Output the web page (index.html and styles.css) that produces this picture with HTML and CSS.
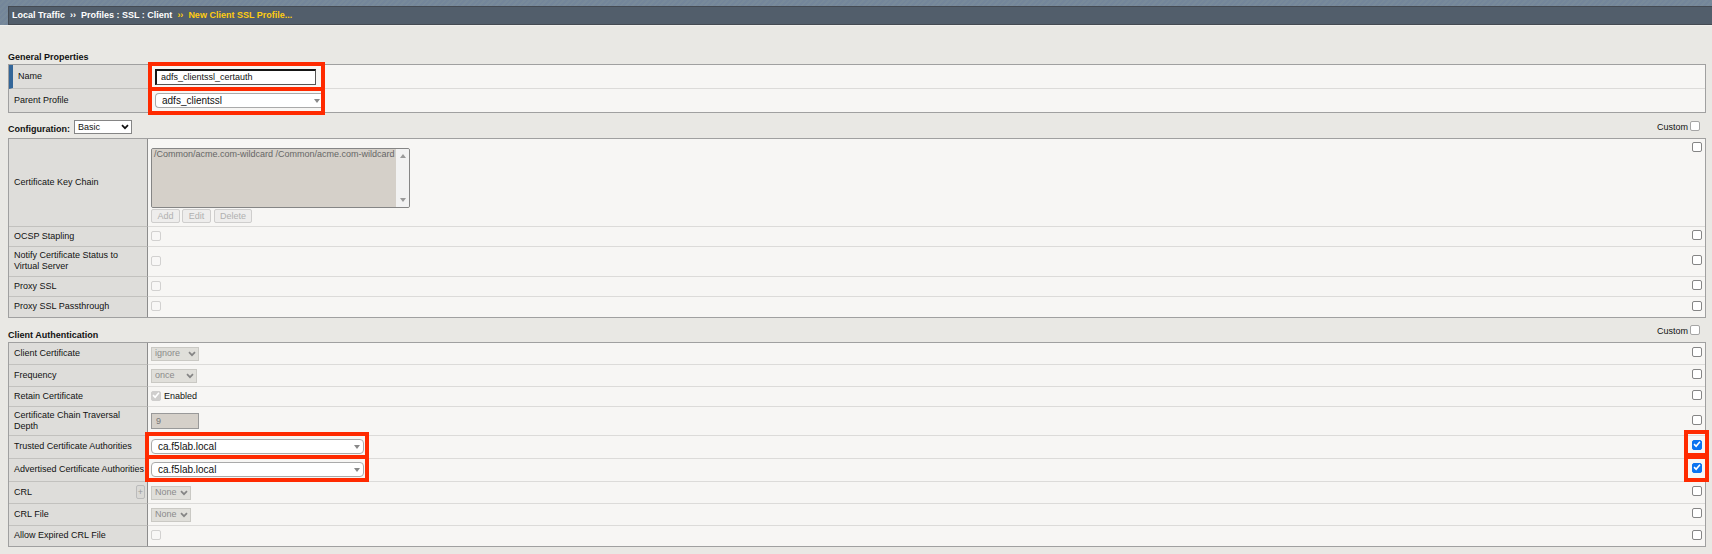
FILE: index.html
```html
<!DOCTYPE html>
<html lang="en">
<head>
<meta charset="utf-8">
<title>New Client SSL Profile</title>
<link rel="stylesheet" href="styles.css">
</head>
<body>
<svg class="defs" aria-hidden="true">
  <symbol id="chevron" viewBox="0 0 8 6"><path d="M1 1.2 4 4.2 7 1.2" fill="none" stroke="currentColor" stroke-width="1.7"/></symbol>
  <symbol id="down" viewBox="0 0 6 4"><path d="M0 0h6L3 4z" fill="currentColor"/></symbol>
  <symbol id="up" viewBox="0 0 6 4"><path d="M0 4h6L3 0z" fill="currentColor"/></symbol>
</svg>
<header class="banner">
  <nav class="crumbs" aria-label="Breadcrumb">
    <span>Local Traffic</span><span class="sep">››</span><span>Profiles : SSL : Client</span><span class="sep current">››</span><span class="current">New Client SSL Profile...</span>
  </nav>
</header>
<main class="page">
  <form>
    <div class="head first"><h2>General Properties</h2></div>
    <section class="panel">
      <div class="row general required">
        <label class="name" for="name">Name</label>
        <div class="value"><span class="field marked mark-name"><input class="text focus" id="name" type="text" value="adfs_clientssl_certauth"></span></div>
      </div>
      <div class="row general">
        <label class="name" for="parent">Parent Profile</label>
        <div class="value"><span class="field marked mark-parent"><select class="combo parent" id="parent"><option>adfs_clientssl</option></select><svg class="arrow edge"><use href="#down"/></svg></span></div>
      </div>
    </section>

    <div class="head">
      <h2><label for="config">Configuration:</label></h2>
      <span class="field basic"><select class="drop" id="config"><option>Basic</option></select><svg class="chev"><use href="#chevron"/></svg></span>
      <label class="custom">Custom <input type="checkbox"></label>
    </div>
    <section class="panel">
      <div class="row chain">
        <label class="name" for="chain">Certificate Key Chain</label>
        <div class="value stack">
          <div class="listbox">
            <select id="chain" multiple disabled><option>/Common/acme.com-wildcard /Common/acme.com-wildcard</option></select>
            <div class="track"><svg><use href="#up"/></svg><svg><use href="#down"/></svg></div>
          </div>
          <div class="buttons"><button type="button" disabled>Add</button><button type="button" disabled>Edit</button><button type="button" class="delete" disabled>Delete</button></div>
        </div>
        <div class="over"><input type="checkbox" aria-label="Custom Certificate Key Chain"></div>
      </div>
      <div class="row small">
        <label class="name" for="ocsp">OCSP Stapling</label>
        <div class="value"><input id="ocsp" type="checkbox" disabled></div>
        <div class="over"><input type="checkbox" aria-label="Custom OCSP Stapling"></div>
      </div>
      <div class="row tall">
        <label class="name" for="notify">Notify Certificate Status to Virtual Server</label>
        <div class="value"><input id="notify" type="checkbox" disabled></div>
        <div class="over"><input type="checkbox" aria-label="Custom Notify Certificate Status"></div>
      </div>
      <div class="row small">
        <label class="name" for="proxy">Proxy SSL</label>
        <div class="value"><input id="proxy" type="checkbox" disabled></div>
        <div class="over"><input type="checkbox" aria-label="Custom Proxy SSL"></div>
      </div>
      <div class="row small">
        <label class="name" for="pass">Proxy SSL Passthrough</label>
        <div class="value"><input id="pass" type="checkbox" disabled></div>
        <div class="over"><input type="checkbox" aria-label="Custom Proxy SSL Passthrough"></div>
      </div>
    </section>

    <div class="head low">
      <h2>Client Authentication</h2>
      <label class="custom">Custom <input type="checkbox"></label>
    </div>
    <section class="panel">
      <div class="row">
        <label class="name" for="cert">Client Certificate</label>
        <div class="value"><span class="field wide"><select class="drop" id="cert" disabled><option>ignore</option></select><svg class="chev"><use href="#chevron"/></svg></span></div>
        <div class="over"><input type="checkbox" aria-label="Custom Client Certificate"></div>
      </div>
      <div class="row">
        <label class="name" for="freq">Frequency</label>
        <div class="value"><span class="field mid"><select class="drop" id="freq" disabled><option>once</option></select><svg class="chev"><use href="#chevron"/></svg></span></div>
        <div class="over"><input type="checkbox" aria-label="Custom Frequency"></div>
      </div>
      <div class="row small">
        <span class="name">Retain Certificate</span>
        <div class="value"><label class="enabled"><input type="checkbox" checked disabled> Enabled</label></div>
        <div class="over"><input type="checkbox" aria-label="Custom Retain Certificate"></div>
      </div>
      <div class="row tall depth-row">
        <label class="name" for="depth">Certificate Chain Traversal Depth</label>
        <div class="value"><input class="text depth" id="depth" type="text" value="9" disabled></div>
        <div class="over"><input type="checkbox" aria-label="Custom Traversal Depth"></div>
      </div>
      <div class="row authority">
        <label class="name" for="trusted">Trusted Certificate Authorities</label>
        <div class="value"><span class="field marked mark-ca"><select class="combo" id="trusted"><option>ca.f5lab.local</option></select><svg class="arrow"><use href="#down"/></svg></span></div>
        <div class="over"><span class="marked mark-check"><input type="checkbox" checked aria-label="Custom Trusted Certificate Authorities"></span></div>
      </div>
      <div class="row authority">
        <label class="name" for="adv">Advertised Certificate Authorities</label>
        <div class="value"><span class="field marked mark-ca"><select class="combo" id="adv"><option>ca.f5lab.local</option></select><svg class="arrow"><use href="#down"/></svg></span></div>
        <div class="over"><span class="marked mark-check"><input type="checkbox" checked aria-label="Custom Advertised Certificate Authorities"></span></div>
      </div>
      <div class="row">
        <div class="name"><label for="crl">CRL</label><button type="button" class="plus" disabled>+</button></div>
        <div class="value"><span class="field narrow"><select class="drop" id="crl" disabled><option>None</option></select><svg class="chev"><use href="#chevron"/></svg></span></div>
        <div class="over"><input type="checkbox" aria-label="Custom CRL"></div>
      </div>
      <div class="row">
        <label class="name" for="crlfile">CRL File</label>
        <div class="value"><span class="field narrow"><select class="drop" id="crlfile" disabled><option>None</option></select><svg class="chev"><use href="#chevron"/></svg></span></div>
        <div class="over"><input type="checkbox" aria-label="Custom CRL File"></div>
      </div>
      <div class="row small">
        <label class="name" for="expired">Allow Expired CRL File</label>
        <div class="value"><input id="expired" type="checkbox" disabled></div>
        <div class="over"><input type="checkbox" aria-label="Custom Allow Expired CRL File"></div>
      </div>
    </section>
  </form>
</main>
</body>
</html>
```

FILE: styles.css
```css
* { box-sizing: border-box; }
body {
  margin: 0;
  background: #e9e8e4;
  color: #111;
  font: 9px/11px "Liberation Sans", Arial, sans-serif;
}
input, select, button { margin: 0; font: inherit; color: inherit; }
.defs { position: absolute; width: 0; height: 0; }

.banner {
  padding: 6px 0 0 8px;
  background: repeating-linear-gradient(135deg, #74869a 0 2px, #788a9a 2px 4px);
  border-bottom: 1px solid #f0efec;
}
.crumbs {
  display: flex;
  align-items: center;
  gap: 5px;
  height: 19px;
  padding-left: 3px;
  background: #525e6b;
  border: 1px solid #444a52;
  border-right: 0;
  color: #fff;
  font-weight: bold;
}
.crumbs .current { color: #fc1; }

.page { padding: 25px 6px 6px 8px; }
.head {
  display: flex;
  align-items: center;
  gap: 4px;
  height: 25px;
  padding-top: 5px;
}
.head.first { height: 13px; padding: 0; }
.head.low { height: 24px; padding-top: 10px; }
.head h2 { margin: 0; padding-top: 2px; font: inherit; font-weight: bold; }
.head.first h2, .head.low h2 { padding-top: 0; }
.custom {
  display: flex;
  align-items: center;
  gap: 2px;
  margin: 0 6px 2px auto;
}
.head.low .custom { margin-bottom: 8px; }
.custom input { margin-bottom: 2px; }

.panel { border: 1px solid #a0a0a0; }
.row {
  display: grid;
  grid-template-columns: 139px 1fr 16px;
  min-height: 22px;
}
.general { min-height: 24px; }
.general:last-child { min-height: 23px; }
.small { min-height: 20px; }
.tall { min-height: 30px; }
.depth-row { min-height: 29px; }
.authority { min-height: 23px; }
.name {
  display: flex;
  align-items: center;
  justify-content: space-between;
  padding: 0 0 1px 5px;
  background: #dedddA;
  border-right: 1px solid #8c8c8c;
  border-bottom: 1px solid #c2c1be;
}
.tall .name { padding-right: 14px; }
.value, .over {
  display: flex;
  align-items: center;
  background: #f7f6f4;
  border-bottom: 1px solid #dcdbd9;
}
.value { padding-left: 3px; }
.value > input[type="checkbox"], .enabled input { margin-bottom: 2px; }
.over { padding: 0 0 3px 3px; }
.authority .over { padding-bottom: 5px; }
.authority .value { padding-bottom: 1px; }
.row:last-child > * { border-bottom: 0; }
.general .value { grid-column: 2 / 4; padding-left: 7px; }
.general:last-child .value { padding-bottom: 1px; }
.general .name { border-right: 0; }
.required .name { border-left: 4px solid #336699; }

input[type="checkbox"] {
  appearance: none;
  position: relative;
  flex: none;
  display: block;
  width: 10px;
  height: 10px;
  background: #fff;
  border: 1px solid #858585;
  border-radius: 2px;
}
input[type="checkbox"]:disabled { background: #f8f7f6; border-color: #d2d1d0; }
input[type="checkbox"]:checked { background: #0b73f0; border-color: #0b73f0; }
input[type="checkbox"]:checked:disabled { background: #cfcecd; border-color: #cfcecd; }
input[type="checkbox"]:checked::after {
  content: "";
  position: absolute;
  inset: 0;
  background: #fff;
  clip-path: polygon(6% 52%, 20% 38%, 38% 57%, 80% 10%, 94% 22%, 40% 86%);
}
.custom input[type="checkbox"] { border-color: #a5a5a5; }
.enabled { display: flex; align-items: center; gap: 3px; }

.field { position: relative; display: inline-flex; }
.text {
  width: 161px;
  height: 16px;
  padding: 0 4px;
  background: #fff;
  border: 1px solid #777;
  border-radius: 0;
}
.text.focus {
  border-color: #151515 #555 #555 #151515;
  border-width: 2px 1px 1px 2px;
  outline: 0;
}
.text.depth { width: 48px; background: #d5d0c9; border-color: #999; color: #777; }
.drop {
  appearance: none;
  width: 100%;
  height: 14px;
  padding: 0 3px;
  background: #fff;
  border: 1px solid #858585;
  border-radius: 0;
}
.drop:disabled { background: #e0dfda; border-color: #cac9c4; color: #8b8b8b; opacity: 1; }
.chev {
  position: absolute;
  right: 3px;
  top: 4px;
  width: 8px;
  height: 6px;
  pointer-events: none;
}
.drop:disabled + .chev { color: #858585; }
.basic { width: 58px; margin-bottom: 2px; }
.wide { width: 48px; }
.mid { width: 46px; }
.narrow { width: 40px; }
.combo {
  appearance: none;
  width: 213px;
  height: 15px;
  padding: 0 6px;
  background: #fff;
  border: 1px solid #aaa;
  border-radius: 4px;
  font-size: 10px;
}
.combo.parent { width: 166px; border-right: 0; border-radius: 4px 0 0 4px; }
.arrow {
  position: absolute;
  right: 4px;
  top: 6px;
  width: 6px;
  height: 4px;
  color: #888;
  pointer-events: none;
}
.arrow.edge { right: 1px; }

.marked { position: relative; }
.marked::after {
  content: "";
  position: absolute;
  z-index: 1;
  border: 4px solid #ff2a00;
  pointer-events: none;
}
.mark-name::after { inset: -7px -9px -6px -7px; }
.mark-parent::after { inset: -6px -4px -7px -7px; }
.mark-ca::after { inset: -7px -5px -5px -6px; }
.mark-check::after { inset: -10px -7px -9px -8px; }

.stack { flex-direction: column; align-items: flex-start; padding-top: 9px; padding-bottom: 3px; }
.listbox {
  display: flex;
  width: 259px;
  height: 60px;
  background: #d5d0c9;
  border: 1px solid #858585;
  border-radius: 2px;
  overflow: hidden;
}
.listbox select {
  appearance: none;
  flex: 1;
  min-width: 0;
  height: 100%;
  padding: 0;
  border: 0;
  border-radius: 0;
  background: #d5d0c9;
  color: #666;
  opacity: 1;
  overflow: hidden;
}
.listbox option { min-height: 11px; padding: 0 0 0 2px; color: #666; }
.track {
  display: flex;
  flex-direction: column;
  justify-content: space-between;
  align-items: center;
  width: 13px;
  padding: 5px 0;
  background: #f2f2f2;
  color: #9a9a9a;
}
.track svg { width: 6px; height: 4px; }
.buttons { display: flex; gap: 2px; padding-top: 1px; }
.buttons button {
  min-width: 29px;
  height: 14px;
  padding: 0 5px;
  background: #eeedec;
  border: 1px solid #cfcecd;
  border-radius: 2px;
  color: #b0b0b0;
}
.buttons .delete { margin-left: 1px; }
.chain .over { align-items: flex-start; padding-top: 3px; }
.plus {
  width: 9px;
  height: 14px;
  margin-right: 2px;
  padding: 0;
  background: #dad9d6;
  border: 1px solid #bbb;
  border-radius: 2px;
  color: #999;
  line-height: 10px;
}
```
